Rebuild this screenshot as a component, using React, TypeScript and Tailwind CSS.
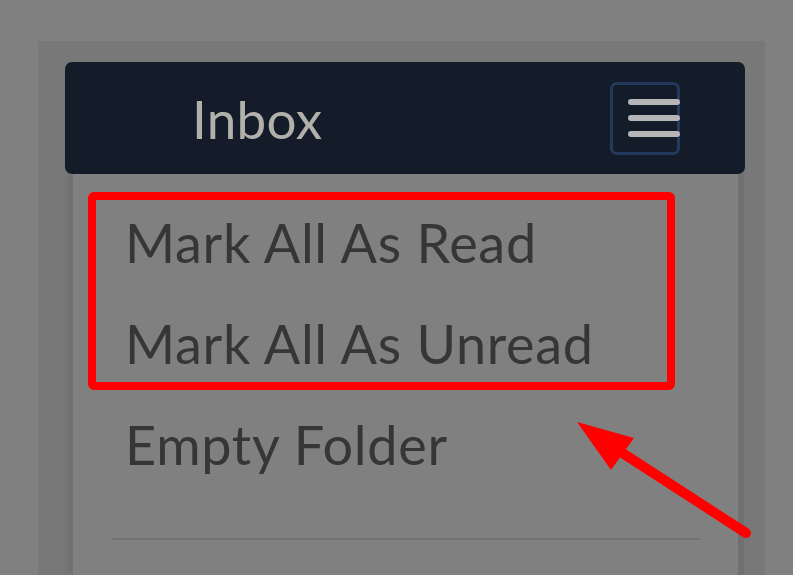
import React from "react";

const items = ["Mark All As Read", "Mark All As Unread", "Empty Folder"];

const MenuButton = () => (
  <button className="flex h-[73px] w-[70px] flex-col items-end justify-center gap-[10px] rounded-[7px] border-[3px] border-[#233a5e] bg-transparent">
    <span className="-mr-[3px] h-[6px] w-[52px] rounded-full bg-[#b6b6b6]" />
    <span className="-mr-[3px] h-[6px] w-[52px] rounded-full bg-[#b6b6b6]" />
    <span className="-mr-[3px] h-[6px] w-[52px] rounded-full bg-[#b6b6b6]" />
  </button>
);

export default function App() {
  return (
    <div className="relative h-[575px] overflow-hidden bg-[#808080] pt-[41px] pl-[38px] font-['Lato','Noto_Sans',sans-serif]">
      <div className="flex h-full w-[727px] flex-col bg-[#787878] pt-[21px] pl-[27px] pr-[20px]">
        <div className="flex h-[112px] shrink-0 items-center justify-between rounded-[7px] bg-[#141c29] pl-[127px] pr-[65px]">
          <span className="text-[53px] leading-none tracking-[0.3px] text-[#b2b0ab]">Inbox</span>
          <MenuButton />
        </div>

        <div className="ml-[8px] mr-[7px] flex-1 bg-[#808080] pt-[18px] shadow-[-5px_0_6px_rgba(0,0,0,0.07),6px_0_0_rgba(0,0,0,0.06)]">
          <ul>
            {items.map((label) => (
              <li key={label} className="h-[101px] pl-[52px] text-[54px] leading-[101px] tracking-[0.7px] text-[#363636]">
                {label}
              </li>
            ))}
          </ul>
          <div className="mt-[43px] ml-[39px] mr-[38px] h-[2px] bg-[#727272]" />
        </div>
      </div>

      {/* annotation */}
      <div className="absolute left-[88px] top-[192px] h-[198px] w-[587px] rounded-[6px] border-[8px] border-[#ff0000]" />
      <svg className="absolute left-0 top-0" width="793" height="575" viewBox="0 0 793 575">
        <line x1="746" y1="533" x2="610" y2="445" stroke="#ff0000" strokeWidth="10" strokeLinecap="round" />
        <polygon points="577,422 634,438 611,470" fill="#ff0000" />
      </svg>
    </div>
  );
}
